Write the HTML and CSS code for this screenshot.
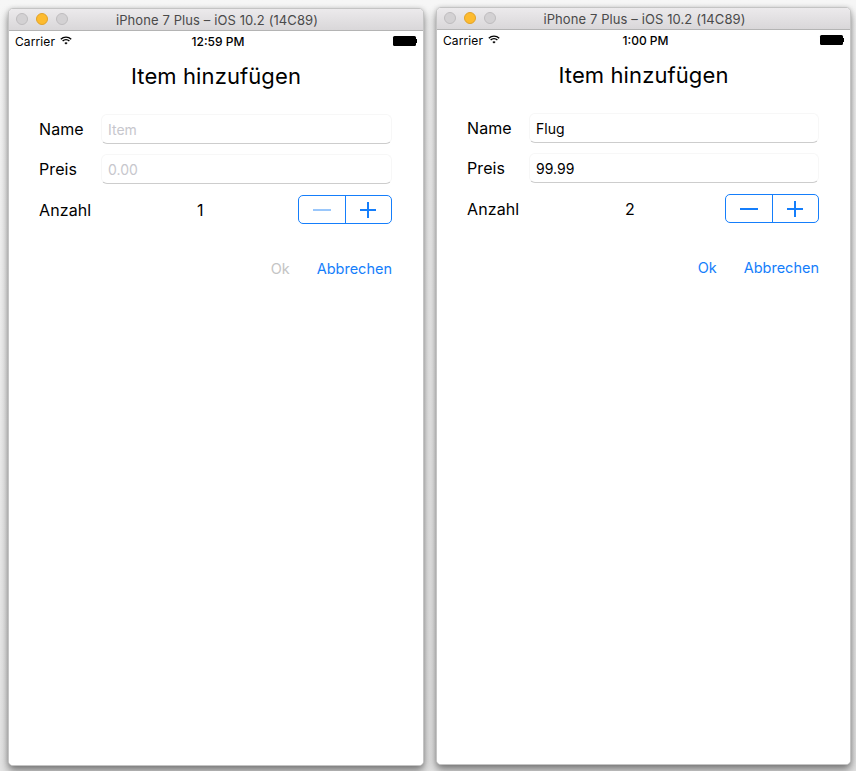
FILE: index.html
```html
<!DOCTYPE html>
<html lang="de">
<head>
<meta charset="utf-8">
<title>iPhone 7 Plus – iOS 10.2</title>
<link rel="stylesheet" href="styles.css">
</head>
<body>
<div class="desk">
  <div class="win win-left">
    <div class="titlebar">
      <div class="lights"><span class="light"></span><span class="light yellow"></span><span class="light"></span></div>
      <div class="wtitle">iPhone 7 Plus – iOS 10.2 (14C89)</div>
    </div>
    <div class="screen">
      <div class="status">
        <div class="carrier">Carrier
          <svg class="wifi" width="12" height="9" viewBox="0 0 12 9"><path d="M6 8.6 L7.6 6.9 A2.4 2.4 0 0 0 4.4 6.9 Z" fill="#000"/><path d="M2.6 5.1 A4.9 4.9 0 0 1 9.4 5.1" stroke="#000" stroke-width="1.4" fill="none"/><path d="M0.8 3.2 A7.5 7.5 0 0 1 11.2 3.2" stroke="#000" stroke-width="1.4" fill="none"/></svg>
        </div>
        <div class="time">12:59 PM</div>
        <div class="battery"><span class="cell"></span><span class="nub"></span></div>
      </div>
      <h1 class="heading">Item hinzufügen</h1>
      <div class="form">
        <div class="row">
          <span class="label">Name</span>
          <div class="field placeholder">Item</div>
        </div>
        <div class="row">
          <span class="label">Preis</span>
          <div class="field placeholder">0.00</div>
        </div>
        <div class="row row-count">
          <span class="label">Anzahl</span>
          <span class="count">1</span>
          <div class="stepper">
            <span class="step minus disabled"><span class="bar"></span></span>
            <span class="step plus"><span class="bar"></span><span class="bar vert"></span></span>
          </div>
        </div>
        <div class="actions">
          <span class="btn disabled">Ok</span>
          <span class="btn">Abbrechen</span>
        </div>
      </div>
    </div>
  </div>

  <div class="win win-right">
    <div class="titlebar">
      <div class="lights"><span class="light"></span><span class="light yellow"></span><span class="light"></span></div>
      <div class="wtitle">iPhone 7 Plus – iOS 10.2 (14C89)</div>
    </div>
    <div class="screen">
      <div class="status">
        <div class="carrier">Carrier
          <svg class="wifi" width="12" height="9" viewBox="0 0 12 9"><path d="M6 8.6 L7.6 6.9 A2.4 2.4 0 0 0 4.4 6.9 Z" fill="#000"/><path d="M2.6 5.1 A4.9 4.9 0 0 1 9.4 5.1" stroke="#000" stroke-width="1.4" fill="none"/><path d="M0.8 3.2 A7.5 7.5 0 0 1 11.2 3.2" stroke="#000" stroke-width="1.4" fill="none"/></svg>
        </div>
        <div class="time">1:00 PM</div>
        <div class="battery"><span class="cell"></span><span class="nub"></span></div>
      </div>
      <h1 class="heading">Item hinzufügen</h1>
      <div class="form">
        <div class="row">
          <span class="label">Name</span>
          <div class="field">Flug</div>
        </div>
        <div class="row">
          <span class="label">Preis</span>
          <div class="field">99.99</div>
        </div>
        <div class="row row-count">
          <span class="label">Anzahl</span>
          <span class="count">2</span>
          <div class="stepper">
            <span class="step minus"><span class="bar"></span></span>
            <span class="step plus"><span class="bar"></span><span class="bar vert"></span></span>
          </div>
        </div>
        <div class="actions">
          <span class="btn">Ok</span>
          <span class="btn">Abbrechen</span>
        </div>
      </div>
    </div>
  </div>
</div>
</body>
</html>
```

FILE: styles.css
```css
* { box-sizing: border-box; }

html, body {
  margin: 0;
  padding: 0;
  width: 856px;
  height: 771px;
  overflow: hidden;
}

body {
  background: linear-gradient(#f6f6f6, #e4e4e4);
  font-family: Inter, "Liberation Sans", sans-serif;
  color: #000;
}

.desk {
  display: flex;
  align-items: flex-start;
  padding: 8px 0 0 8px;
  gap: 12px;
}

.win {
  width: 416px;
  height: 758px;
  display: flex;
  flex-direction: column;
  border: 1px solid #c4c4c4;
  border-radius: 5px;
  overflow: hidden;
  background: #fff;
  box-shadow: 0 5px 9px rgba(0, 0, 0, 0.45), 0 0 4px rgba(0, 0, 0, 0.12);
}

.win-right {
  width: 415px;
  margin-top: -1px;
}

.titlebar {
  height: 22px;
  flex: none;
  position: relative;
  display: flex;
  align-items: center;
  justify-content: center;
  background: linear-gradient(#eceaec, #d9d7d9);
  border-bottom: 1px solid #b4b4b4;
}

.lights {
  position: absolute;
  left: 7px;
  top: 4px;
  display: flex;
  gap: 8px;
}

.light {
  width: 12px;
  height: 12px;
  border-radius: 50%;
  background: #d3d1d3;
  border: 1px solid #bebcbe;
}

.light.yellow {
  background: #fdbb2f;
  border-color: #e0a229;
}

.wtitle {
  font-size: 13px;
  color: #4a4a4a;
  letter-spacing: 0.1px;
  padding-left: 2px;
}

.screen {
  flex: 1;
  background: #fff;
}

.status {
  height: 20px;
  display: flex;
  align-items: center;
  justify-content: space-between;
  padding: 0 6px 0 6px;
  font-size: 12px;
  position: relative;
}

.carrier {
  display: flex;
  align-items: center;
  gap: 5px;
  letter-spacing: 0.1px;
}

.wifi { margin-top: -2px; }

.time {
  position: absolute;
  left: 0;
  right: 0;
  text-align: center;
  font-weight: 500;
  font-size: 12px;
  padding-left: 4px;
}

.battery {
  display: flex;
  align-items: center;
}

.battery .cell {
  width: 23px;
  height: 10px;
  background: #000;
  border-radius: 1.5px;
}

.battery .nub {
  width: 1.5px;
  height: 4px;
  background: #000;
}

.heading {
  margin: 12px 0 0;
  font-size: 22px;
  line-height: 26px;
  font-weight: 400;
  text-align: center;
  letter-spacing: 0.1px;
}

.form {
  padding: 25px 31px 0 30px;
  display: flex;
  flex-direction: column;
  gap: 10px;
}

.row {
  display: flex;
  align-items: center;
  height: 30px;
}

.label {
  width: 62px;
  flex: none;
  font-size: 16px;
  letter-spacing: 0.1px;
}

.field {
  flex: 1;
  height: 30px;
  border: 1px solid #f7f7f7;
  border-bottom-color: #cdcdcd;
  border-radius: 6px;
  padding: 0 6px;
  display: flex;
  align-items: center;
  font-size: 14px;
  color: #000;
}

.field.placeholder { color: #c7c7cd; }

.row-count {
  height: 29px;
  margin-top: 1px;
}

.count {
  flex: 1;
  font-size: 16px;
  padding-left: 96px;
}

.stepper {
  width: 94px;
  height: 29px;
  border: 1px solid #157efb;
  border-radius: 5px;
  display: flex;
}

.step {
  flex: 1;
  position: relative;
  display: flex;
  align-items: center;
  justify-content: center;
}

.step.minus { border-right: 1px solid #157efb; }

.step .bar {
  position: absolute;
  width: 16px;
  height: 2px;
  background: #157efb;
  top: 50%;
  left: 50%;
  transform: translate(-50%, -50%);
}

.step.minus .bar { width: 18px; }

.step .bar.vert {
  width: 2px;
  height: 16px;
}

.step.disabled .bar { background: #9ac7fb; }

.actions {
  display: flex;
  justify-content: flex-end;
  gap: 27px;
  margin-top: 25px;
  font-size: 14.5px;
  line-height: 20px;
}

.btn { color: #147efb; }
.btn.disabled { color: #c4c4c4; }
```
